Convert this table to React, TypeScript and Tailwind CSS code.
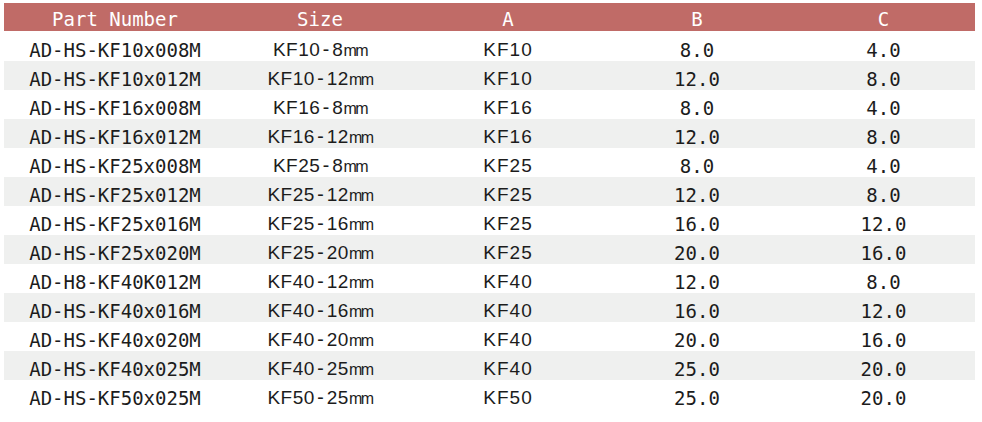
import React from 'react';

type Row = {
  part: string;
  size: string;
  a: string;
  b: string;
  c: string;
};

const rows: Row[] = [
  { part: 'AD-HS-KF10x008M', size: 'KF10-8', a: 'KF10', b: '8.0', c: '4.0' },
  { part: 'AD-HS-KF10x012M', size: 'KF10-12', a: 'KF10', b: '12.0', c: '8.0' },
  { part: 'AD-HS-KF16x008M', size: 'KF16-8', a: 'KF16', b: '8.0', c: '4.0' },
  { part: 'AD-HS-KF16x012M', size: 'KF16-12', a: 'KF16', b: '12.0', c: '8.0' },
  { part: 'AD-HS-KF25x008M', size: 'KF25-8', a: 'KF25', b: '8.0', c: '4.0' },
  { part: 'AD-HS-KF25x012M', size: 'KF25-12', a: 'KF25', b: '12.0', c: '8.0' },
  { part: 'AD-HS-KF25x016M', size: 'KF25-16', a: 'KF25', b: '16.0', c: '12.0' },
  { part: 'AD-HS-KF25x020M', size: 'KF25-20', a: 'KF25', b: '20.0', c: '16.0' },
  { part: 'AD-H8-KF40K012M', size: 'KF40-12', a: 'KF40', b: '12.0', c: '8.0' },
  { part: 'AD-HS-KF40x016M', size: 'KF40-16', a: 'KF40', b: '16.0', c: '12.0' },
  { part: 'AD-HS-KF40x020M', size: 'KF40-20', a: 'KF40', b: '20.0', c: '16.0' },
  { part: 'AD-HS-KF40x025M', size: 'KF40-25', a: 'KF40', b: '25.0', c: '20.0' },
  { part: 'AD-HS-KF50x025M', size: 'KF50-25', a: 'KF50', b: '25.0', c: '20.0' },
];

const cols = 'grid grid-cols-[222px_188px_188px_190px_183px] w-[971px]';
const mono = "font-['DejaVu_Sans_Mono',monospace]";
const sans = "font-['Liberation_Sans',Arial,sans-serif]";

export default function App() {
  return (
    <div className="w-[982px] h-[422px] bg-white pt-[3px] pl-[4px]">
      <div className={`${cols} h-[28px] bg-[#c06b67] text-white text-[19px] items-center ${mono}`}>
        <div className="text-center pt-[2px]">Part Number</div>
        <div className="text-center pt-[2px]">Size</div>
        <div className="text-center pt-[2px]">A</div>
        <div className="text-center pt-[2px]">B</div>
        <div className="text-center pt-[2px]">C</div>
      </div>
      <div className="pt-[1px]">
        {rows.map((r, i) => {
          const [head, tail] = r.size.split('-');
          return (
            <div
              key={r.part}
              className={`${cols} h-[29px] items-center text-[#1c1c1c] text-[19px] ${i % 2 === 1 ? 'bg-[#eff0ef]' : 'bg-white'}`}
            >
              <div className={`text-center pt-[3px] ${mono}`}>{r.part}</div>
              <div className={`text-center pt-[3px] ${sans} tracking-[0.5px]`}>
                {head}
                <span className={mono}>-</span>
                {tail}
                <span className="text-[16px] tracking-[-1.5px]">mm</span>
              </div>
              <div className={`text-center pt-[3px] ${sans} tracking-[1px]`}>{r.a}</div>
              <div className={`text-center pt-[3px] ${mono}`}>{r.b}</div>
              <div className={`text-center pt-[3px] ${mono}`}>{r.c}</div>
            </div>
          );
        })}
      </div>
    </div>
  );
}
